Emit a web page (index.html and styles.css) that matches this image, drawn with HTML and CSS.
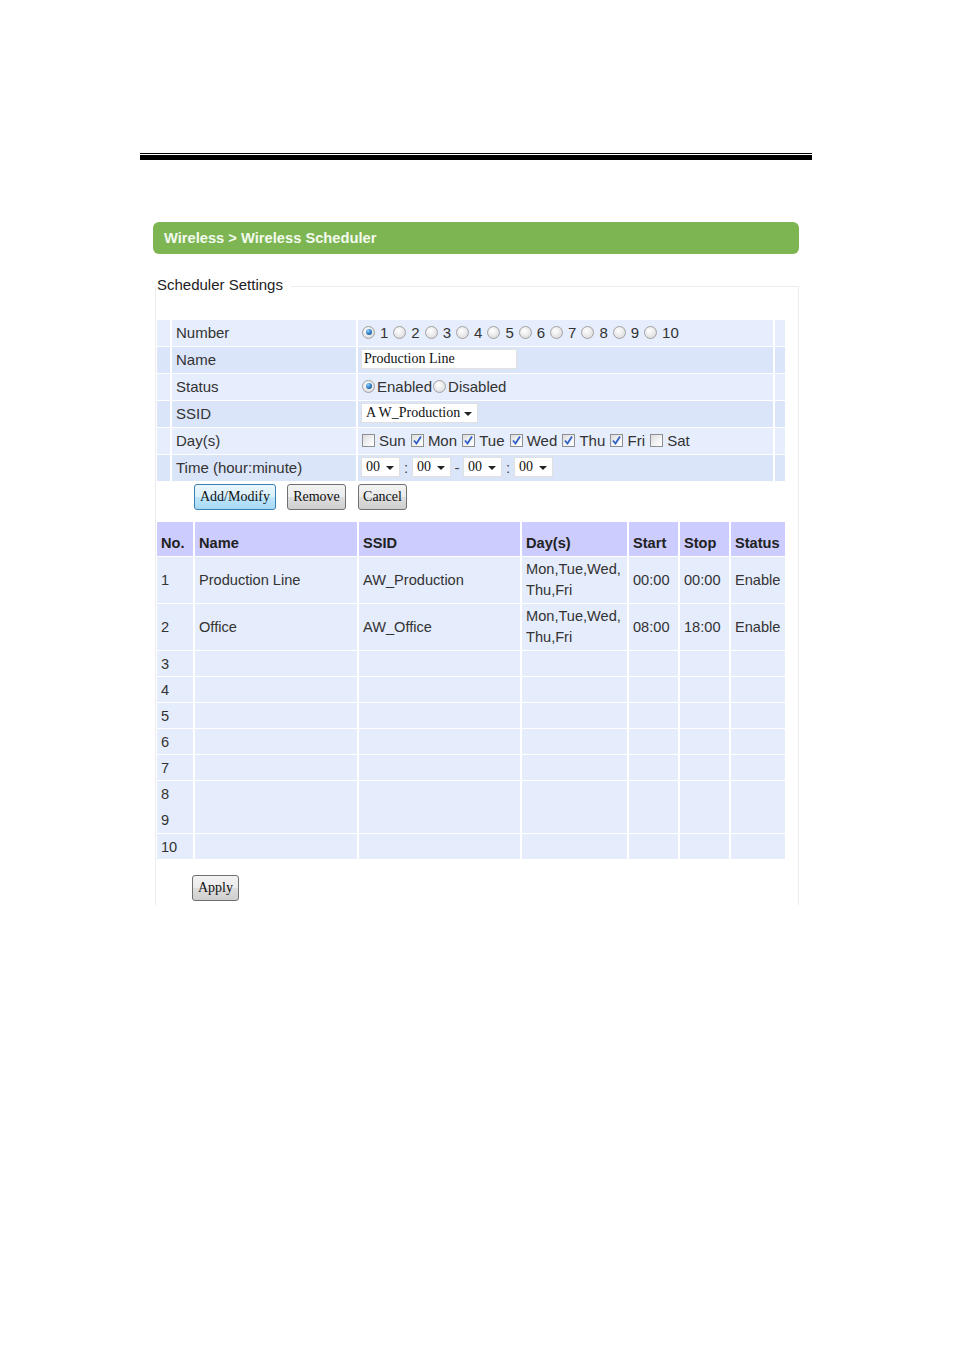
FILE: index.html
```html
<!DOCTYPE html>
<html>
<head>
<meta charset="utf-8">
<title>Wireless Scheduler</title>
<link rel="stylesheet" href="styles.css">
</head>
<body>
<div class="page">
  <div class="rule"><div class="rule-thin"></div><div class="rule-thick"></div></div>

  <div class="titlebar">Wireless &gt; Wireless Scheduler</div>

  <div class="fieldset">
    <div class="legend">Scheduler Settings</div>

    <table class="settings">
      <tr class="light">
        <td class="c-pad"></td>
        <td class="c-label">Number</td>
        <td class="c-value">
          <span class="radio checked"></span><span class="rlabel">1</span><span class="radio"></span><span class="rlabel">2</span><span class="radio"></span><span class="rlabel">3</span><span class="radio"></span><span class="rlabel">4</span><span class="radio"></span><span class="rlabel">5</span><span class="radio"></span><span class="rlabel">6</span><span class="radio"></span><span class="rlabel">7</span><span class="radio"></span><span class="rlabel">8</span><span class="radio"></span><span class="rlabel">9</span><span class="radio"></span><span class="rlabel">10</span>
        </td>
        <td class="c-end"></td>
      </tr>
      <tr class="dark">
        <td class="c-pad"></td>
        <td class="c-label">Name</td>
        <td class="c-value"><span class="textbox">Production Line</span></td>
        <td class="c-end"></td>
      </tr>
      <tr class="light">
        <td class="c-pad"></td>
        <td class="c-label">Status</td>
        <td class="c-value"><span class="radio tight checked"></span><span class="slabel">Enabled</span><span class="radio tight"></span><span class="slabel">Disabled</span></td>
        <td class="c-end"></td>
      </tr>
      <tr class="dark">
        <td class="c-pad"></td>
        <td class="c-label">SSID</td>
        <td class="c-value"><span class="select ssid">A W_Production<span class="caret"></span></span></td>
        <td class="c-end"></td>
      </tr>
      <tr class="light">
        <td class="c-pad"></td>
        <td class="c-label">Day(s)</td>
        <td class="c-value days-row">
          <span class="check"></span><span class="clabel">Sun</span>
          <span class="check on"><svg viewBox="0 0 13 13"><path d="M3 6.5 L5.5 9.5 L10 2.5" fill="none" stroke="#2d5fc4" stroke-width="1.8"/></svg></span><span class="clabel">Mon</span>
          <span class="check on"><svg viewBox="0 0 13 13"><path d="M3 6.5 L5.5 9.5 L10 2.5" fill="none" stroke="#2d5fc4" stroke-width="1.8"/></svg></span><span class="clabel">Tue</span>
          <span class="check on"><svg viewBox="0 0 13 13"><path d="M3 6.5 L5.5 9.5 L10 2.5" fill="none" stroke="#2d5fc4" stroke-width="1.8"/></svg></span><span class="clabel">Wed</span>
          <span class="check on"><svg viewBox="0 0 13 13"><path d="M3 6.5 L5.5 9.5 L10 2.5" fill="none" stroke="#2d5fc4" stroke-width="1.8"/></svg></span><span class="clabel">Thu</span>
          <span class="check on"><svg viewBox="0 0 13 13"><path d="M3 6.5 L5.5 9.5 L10 2.5" fill="none" stroke="#2d5fc4" stroke-width="1.8"/></svg></span><span class="clabel">Fri</span>
          <span class="check"></span><span class="clabel">Sat</span>
        </td>
        <td class="c-end"></td>
      </tr>
      <tr class="dark">
        <td class="c-pad"></td>
        <td class="c-label">Time (hour:minute)</td>
        <td class="c-value">
          <span class="select time">00<span class="caret"></span></span><span class="sep">:</span><span class="select time">00<span class="caret"></span></span><span class="sep">-</span><span class="select time">00<span class="caret"></span></span><span class="sep">:</span><span class="select time">00<span class="caret"></span></span>
        </td>
        <td class="c-end"></td>
      </tr>
    </table>

    <div class="actions">
      <span class="btn primary">Add/Modify</span>
      <span class="btn remove">Remove</span>
      <span class="btn cancel">Cancel</span>
    </div>

    <table class="list">
      <tr class="head">
        <th class="w-no">No.</th>
        <th class="w-name">Name</th>
        <th class="w-ssid">SSID</th>
        <th class="w-day">Day(s)</th>
        <th class="w-start">Start</th>
        <th class="w-stop">Stop</th>
        <th class="w-status">Status</th>
      </tr>
      <tr class="tall">
        <td>1</td><td>Production Line</td><td>AW_Production</td><td class="days">Mon,Tue,Wed,<br>Thu,Fri</td><td>00:00</td><td>00:00</td><td>Enable</td>
      </tr>
      <tr class="tall">
        <td>2</td><td>Office</td><td>AW_Office</td><td class="days">Mon,Tue,Wed,<br>Thu,Fri</td><td>08:00</td><td>18:00</td><td>Enable</td>
      </tr>
      <tr><td>3</td><td></td><td></td><td></td><td></td><td></td><td></td></tr>
      <tr><td>4</td><td></td><td></td><td></td><td></td><td></td><td></td></tr>
      <tr><td>5</td><td></td><td></td><td></td><td></td><td></td><td></td></tr>
      <tr><td>6</td><td></td><td></td><td></td><td></td><td></td><td></td></tr>
      <tr><td>7</td><td></td><td></td><td></td><td></td><td></td><td></td></tr>
      <tr class="double"><td>8<br>9</td><td></td><td></td><td></td><td></td><td></td><td></td></tr>
      <tr><td>10</td><td></td><td></td><td></td><td></td><td></td><td></td></tr>
    </table>

    <div class="apply-row"><span class="btn apply">Apply</span></div>
  </div>
</div>
</body>
</html>
```

FILE: styles.css
```css
html, body {
  margin: 0;
  padding: 0;
  background: #ffffff;
}

.page {
  font-family: "Liberation Sans", Arial, sans-serif;
  font-size: 15px;
  color: #333333;
  padding-top: 153px;
  height: 1197px;
}

/* top rule */
.rule {
  margin-left: 140px;
  width: 672px;
}
.rule-thin {
  height: 1px;
  background: #000;
}
.rule-thick {
  height: 5px;
  margin-top: 1px;
  background: #000;
}

/* green title bar */
.titlebar {
  margin: 62px 0 0 153px;
  width: 635px;
  height: 32px;
  line-height: 32px;
  padding-left: 11px;
  background: #7db553;
  border-radius: 6px;
  color: #f4faee;
  font-weight: bold;
  font-size: 14.7px;
}

/* fieldset */
.fieldset {
  position: relative;
  margin: 32px 0 0 155px;
  width: 642px;
  height: 618px;
  border: 1px solid #ececec;
  border-bottom: none;
}
.legend {
  position: absolute;
  top: -11px;
  left: 1px;
  padding-right: 8px;
  background: #fff;
  color: #222;
  font-size: 15px;
  line-height: 18px;
}

/* settings table */
.settings {
  margin: 33px 0 0 1px;
  width: 628px;
  border-collapse: separate;
  border-spacing: 0;
  table-layout: fixed;
}
.settings td {
  height: 26px;
  padding: 0 0 2px 0;
  box-sizing: border-box;
  vertical-align: middle;
  white-space: nowrap;
}
.settings tr + tr td {
  border-top: 1px solid #fff;
  height: 27px;
}
.settings td + td {
  border-left: 2px solid #fff;
}
.settings tr.light td { background: #e6edfc; }
.settings tr.dark td { background: #dbe5fa; }
.c-pad { width: 13px; }
.c-label { width: 186px; padding-left: 4px !important; }
.c-value { width: 417px; padding-left: 3px !important; }
.c-end { width: 12px; }
.days-row { font-size: 15px; }

/* radios */
.radio {
  display: inline-block;
  box-sizing: border-box;
  width: 13px;
  height: 13px;
  border-radius: 50%;
  border: 1px solid #a2a2a2;
  background: radial-gradient(circle at 40% 35%, #ffffff 0%, #e8e8e8 55%, #cfcfcf 100%);
  vertical-align: -1px;
  margin-left: 1px;
  margin-right: 5px;
  position: relative;
}
.radio.checked::after {
  content: "";
  position: absolute;
  left: 2.5px;
  top: 2.5px;
  width: 6px;
  height: 6px;
  border-radius: 50%;
  background: radial-gradient(circle at 35% 30%, #8fd0ff 0%, #2a78c0 55%, #123f6e 100%);
}
.rlabel {
  margin-right: 4px;
  color: #333;
}
.radio.tight {
  margin-right: 2px;
}
.slabel {
  margin-right: 0;
}

/* text box */
.textbox {
  display: inline-block;
  box-sizing: border-box;
  width: 156px;
  height: 20px;
  line-height: 18px;
  padding-left: 2px;
  background: #fff;
  border: 1px solid #e2e2e2;
  font-family: "Liberation Serif", "Times New Roman", serif;
  font-size: 14px;
  color: #111;
  vertical-align: middle;
}

/* selects */
.select {
  display: inline-block;
  box-sizing: border-box;
  height: 20px;
  line-height: 18px;
  padding-left: 4px;
  background: #fff;
  border: 1px solid #e0e0e0;
  font-family: "Liberation Serif", "Times New Roman", serif;
  font-size: 14px;
  color: #111;
  vertical-align: middle;
  position: relative;
}
.select.ssid { width: 117px; }
.select.time { width: 39px; }
.caret {
  position: absolute;
  right: 5px;
  top: 8px;
  width: 0;
  height: 0;
  border-left: 4px solid transparent;
  border-right: 4px solid transparent;
  border-top: 4px solid #222;
}
.sep {
  display: inline-block;
  width: 12px;
  text-align: center;
  color: #444;
  vertical-align: middle;
}

/* checkboxes */
.check {
  display: inline-block;
  box-sizing: border-box;
  width: 13px;
  height: 13px;
  border: 1px solid #8e8f8f;
  background: linear-gradient(135deg, #dcdcdc 0%, #f4f4f4 60%, #ffffff 100%);
  vertical-align: -1px;
  margin-left: 1px;
  margin-right: 4px;
  position: relative;
}
.check svg {
  position: absolute;
  left: -1px;
  top: -1px;
  width: 13px;
  height: 13px;
}
.clabel {
  margin-right: 0;
}

/* buttons */
.actions {
  display: flex;
  align-items: center;
  margin: 3px 0 0 38px;
  height: 26px;
}
.btn {
  display: inline-flex;
  align-items: center;
  justify-content: center;
  box-sizing: border-box;
  height: 26px;
  padding: 0;
  border: 1px solid #707070;
  border-radius: 3px;
  background: linear-gradient(#f2f2f2 0%, #ebebeb 50%, #dddddd 51%, #cfcfcf 100%);
  font-family: "Liberation Serif", "Times New Roman", serif;
  font-size: 14px;
  color: #111;
}
.btn.primary {
  border-color: #3c7fb1;
  background: linear-gradient(#eaf6fd 0%, #d9f0fc 50%, #bee6fd 51%, #a7d9f5 100%);
  width: 82px;
}
.btn.remove { width: 59px; margin-left: 11px; }
.btn.cancel { width: 49px; margin-left: 12px; }

/* list table */
.list {
  margin: 12px 0 0 1px;
  width: 628px;
  border-collapse: separate;
  border-spacing: 0;
  table-layout: fixed;
}
.list th, .list td {
  box-sizing: border-box;
  padding: 0 0 0 4px;
  text-align: left;
  vertical-align: middle;
  white-space: nowrap;
  background: #e5ecfc;
  color: #333;
  font-size: 14.6px;
  height: 26px;
}
.list th {
  background: #ccccff;
  color: #222;
  font-weight: bold;
  height: 34px;
  vertical-align: bottom;
  padding-bottom: 5px;
}
.list th + th, .list td + td {
  border-left: 2px solid #fff;
}
.list tr + tr td {
  border-top: 1px solid #fff;
  height: 26px;
}
.list tr.tall td {
  height: 47px;
}
.list td.days {
  line-height: 21px;
}
.list tr.double td {
  height: 53px;
  line-height: 26px;
}
.list th.w-no { width: 36px; }
.list th.w-name { width: 164px; }
.list th.w-ssid { width: 163px; }
.list th.w-day { width: 107px; }
.list th.w-start { width: 51px; }
.list th.w-stop { width: 51px; }
.list th.w-status { width: 56px; }

.apply-row {
  margin: 16px 0 0 36px;
}
.btn.apply {
  width: 47px;
}
```
